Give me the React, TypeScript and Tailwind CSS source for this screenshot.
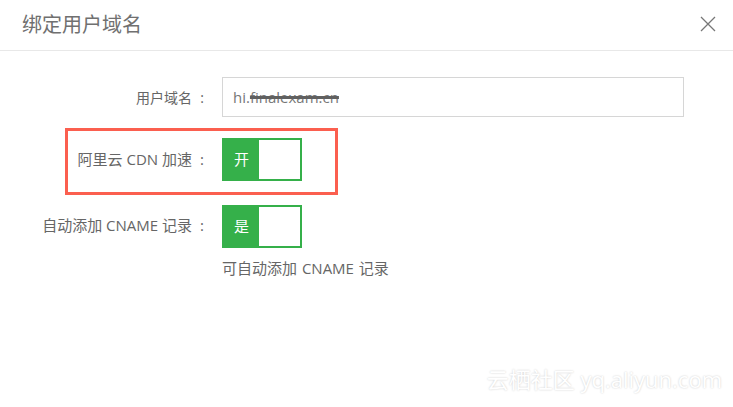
const font = { fontFamily: '"Open Sans", "Noto Sans CJK SC", sans-serif' };

function Toggle({ label }: { label: string }) {
  return (
    <div className="flex h-[43px] w-[80px] border-2 border-[#35b04a] bg-white">
      <div className="flex w-[35px] items-center justify-center bg-[#35b04a] text-[15px] text-white">
        {label}
      </div>
    </div>
  );
}

function Label({ text, className = "" }: { text: string; className?: string }) {
  return (
    <label className={`flex w-[212px] justify-end ${className}`}>
      <span>{text}</span>
      <span className="inline-block w-[20px] text-center">:</span>
    </label>
  );
}

export default function App() {
  return (
    <div
      className="relative h-[407px] w-[733px] overflow-hidden bg-white text-[#666]"
      style={font}
    >
      {/* header */}
      <div className="flex h-[51px] items-center justify-between border-b border-[#e8e8e8] pl-[22px] pr-[17px]">
        <h1 className="text-[20px] text-[#707070]">绑定用户域名</h1>
        <svg width="16" height="16" viewBox="0 0 16 16" className="-mt-[3px]">
          <path d="M1 1 L15 15 M15 1 L1 15" stroke="#777" strokeWidth="1.3" fill="none" />
        </svg>
      </div>

      {/* body */}
      <div className="flex flex-col pt-[26px]">
        <div className="flex items-center">
          <Label text="用户域名" className="text-[14px]" />
          <div className="ml-[10px] flex h-[40px] w-[462px] items-center border border-[#d6d6d6] px-[10px] text-[15px] text-[#777]">
            hi.
            <span className="line-through decoration-[#606060] decoration-[3px]">finalexam.cn</span>
          </div>
        </div>

        <div className="relative mt-[21px] flex items-center">
          <Label text="阿里云 CDN 加速" className="text-[15px]" />
          <div className="ml-[10px]">
            <Toggle label="开" />
          </div>
          <div className="absolute left-[65px] top-[-10px] h-[67px] w-[273px] border-[3px] border-[#fb5f4f]" />
        </div>

        <div className="mt-[24px] flex items-start">
          <Label text="自动添加 CNAME 记录" className="pt-[9px] text-[15px]" />
          <div className="ml-[10px] flex flex-col">
            <Toggle label="是" />
            <p className="mt-[10px] text-[15px] leading-[20px] [word-spacing:1px]">可自动添加 CNAME 记录</p>
          </div>
        </div>
      </div>

      {/* watermark */}
      <div className="absolute bottom-[11px] right-[11px] text-[22px] text-white [text-shadow:0_0_2px_rgba(0,0,0,0.22)]">
        云栖社区 yq.aliyun.com
      </div>
    </div>
  );
}
